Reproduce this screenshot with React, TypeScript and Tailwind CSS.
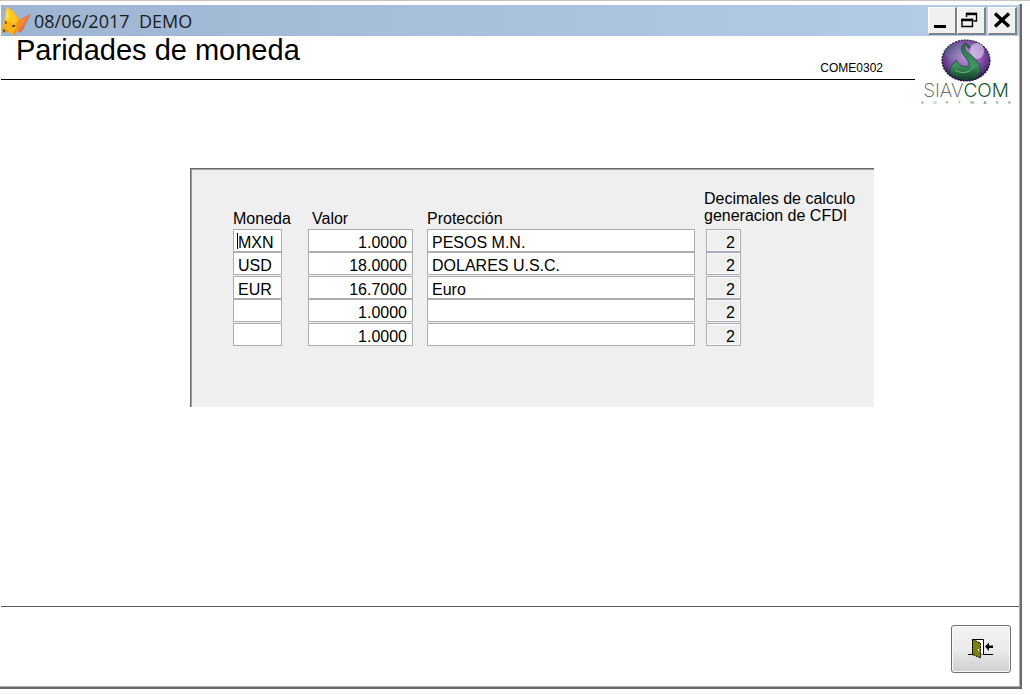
import type { ReactNode } from "react";

type Row = {
  moneda: string;
  valor: string;
  proteccion: string;
  decimales: string;
};

const rows: Row[] = [
  { moneda: "MXN", valor: "1.0000", proteccion: "PESOS M.N.", decimales: "2" },
  { moneda: "USD", valor: "18.0000", proteccion: "DOLARES U.S.C.", decimales: "2" },
  { moneda: "EUR", valor: "16.7000", proteccion: "Euro", decimales: "2" },
  { moneda: "", valor: "1.0000", proteccion: "", decimales: "2" },
  { moneda: "", valor: "1.0000", proteccion: "", decimales: "2" },
];

const field =
  "block h-[23px] border border-[#abadb3] bg-white pt-1 pr-[5px] pl-1 leading-4 outline-none";

function FoxIcon() {
  return (
    <svg className="h-[30px] w-[31px] shrink-0" viewBox="0 0 93 90" aria-hidden="true">
      <path d="M91 24 76 30 60 38 52 50 52 78 60 80 68 68 76 50Z" fill="#e2744f" />
      <path d="M82 30 62 40 52 50 52 64 62 60 72 44Z" fill="#f08a3c" />
      <path d="M18 2 27 10 38 16 46 28 56 38 60 50 56 68 48 76 40 88 30 82 24 78 6 80 4 60 10 48 12 30Z" fill="#f6b01a" />
      <path d="M18 2 27 10 38 18 44 30 50 44 40 54 22 46 12 54 12 30Z" fill="#fcc922" />
      <path d="M18 6 22 14 24 34 16 42 15 26Z" fill="#ffdf4a" />
      <path d="M56 38 60 50 56 68 48 76 40 88 36 80 46 66 48 50Z" fill="#f0901c" />
      <path d="M4 64 14 70 24 74 22 78 6 80Z" fill="#d69a1c" />
      <path d="M12 46h5v7h-5zM34 57h8v6h-8zM6 71h6v6h-6z" fill="#6d4210" />
    </svg>
  );
}

function SiavcomLogo() {
  return (
    <div className="flex w-[90px] flex-col items-center">
      <svg className="h-[45px] w-[52px]" viewBox="0 0 52 45" aria-hidden="true">
        <defs>
          <radialGradient id="ball" cx="0.5" cy="0.4" r="0.6">
            <stop offset="0" stopColor="#b79bd8" />
            <stop offset="0.45" stopColor="#9a62bc" />
            <stop offset="0.8" stopColor="#5f3684" />
            <stop offset="1" stopColor="#1c1236" />
          </radialGradient>
          <linearGradient id="shine" x1="0" y1="0" x2="1" y2="1">
            <stop offset="0" stopColor="#2f5a68" />
            <stop offset="1" stopColor="#8fa8c4" stopOpacity="0.3" />
          </linearGradient>
          <linearGradient id="snake" x1="0" y1="0" x2="0" y2="1">
            <stop offset="0" stopColor="#2b6e58" />
            <stop offset="0.6" stopColor="#3f9460" />
            <stop offset="1" stopColor="#123f28" />
          </linearGradient>
        </defs>
        <ellipse cx="26" cy="22.5" rx="24" ry="20.5" fill="url(#ball)" stroke="#24163c" strokeWidth="1.2" strokeDasharray="2 1" />
        <ellipse cx="15" cy="14" rx="10" ry="8" fill="url(#shine)" opacity="0.7" />
        <ellipse cx="37" cy="13" rx="7" ry="8" fill="#e2d8f2" opacity="0.6" />
        <path
          d="M30 10C29 4 22 4 21.5 10C21 16 27 20 29 25C30 30 21 31 16 22C11 27 8 33 12 37C20 43 34 43 39 37C43 30 38 23 31 17C27 14 24 12 24.5 9C25 7 28 7 28 10Z"
          fill="url(#snake)"
          stroke="#174a34"
          strokeWidth="0.8"
        />
        <path d="M15 32C22 37 33 34 34 27" fill="none" stroke="#68b880" strokeWidth="1" />
      </svg>
      <div className="font-['Inter',sans-serif] text-[19px] leading-4 font-extralight text-[#555555]">
        SIAV<span className="font-light text-[#17552d]">COM</span>
      </div>
      <div className="mt-0.5 flex w-full justify-between text-[4px] leading-1 text-[#666666]">
        {["S", "O", "F", "T", "W", "A", "R", "E"].map((c) => (
          <span key={c}>{c}</span>
        ))}
      </div>
    </div>
  );
}

function WindowButton({ label, children }: { label: string; children: ReactNode }) {
  return (
    <button
      type="button"
      aria-label={label}
      className="flex h-7 w-[29px] items-center justify-center border-t border-r-2 border-b-2 border-l border-t-white border-r-[#7d8288] border-b-[#7d8288] border-l-white bg-[#f0f0f0]"
    >
      <svg className="h-5 w-5" viewBox="0 0 20 20" fill="none" stroke="#000">
        {children}
      </svg>
    </button>
  );
}

export default function App() {
  return (
    <div className="h-screen border-t border-[#c9c2c4] bg-[#fdfdfd] pt-[3px] pr-2 pb-1.5 font-['Liberation_Sans',Arial,sans-serif] text-black">
      <div className="flex h-full flex-col border-r-2 border-b-2 border-[#696969] bg-white">
        <div className="flex min-h-0 flex-1 flex-col border-r border-b border-[#b0b0b0] pt-px pl-px">
          {/* Barra de título */}
          <div className="flex h-[31px] shrink-0 items-center bg-linear-to-r from-[#9db5d2] to-[#b5cde8] pr-0.5">
            <FoxIcon />
            <span className="ml-0.5 flex-1 font-['Open_Sans','Noto_Sans',sans-serif] text-lg leading-6 whitespace-pre text-[#1a1a1a]">
              08/06/2017{"  "}DEMO
            </span>
            <div className="flex">
              <WindowButton label="Minimizar">
                <path d="M2 16.5h12" strokeWidth="3" />
              </WindowButton>
              <WindowButton label="Restaurar">
                <path d="M5.5 7V3.5h10V11h-3" strokeWidth="1.4" />
                <path d="M5 4h11" strokeWidth="2.4" />
                <path d="M1 9.5h10.5v7H1z" strokeWidth="1.4" />
                <path d="M.3 10h12" strokeWidth="2.4" />
              </WindowButton>
            </div>
            <div className="ml-0.5">
              <WindowButton label="Cerrar">
                <path d="M3 3.5 17 16.5M17 3.5 3 16.5" strokeWidth="3.4" />
              </WindowButton>
            </div>
          </div>

          {/* Encabezado */}
          <header className="flex shrink-0 items-start">
            <div className="flex h-11 flex-1 items-start justify-between border-b border-black pr-8 pl-[15px]">
              <h1 className="text-[29px] leading-7">Paridades de moneda</h1>
              <span className="mt-6 text-xs leading-4">COME0302</span>
            </div>
            <div className="pt-0.5 pr-2 pl-1.5">
              <SiavcomLogo />
            </div>
          </header>

          {/* Tabla de paridades */}
          <main className="flex-1 pt-[63px] pr-[145px] pl-[189px]">
            <div className="border-t border-l border-[#696969]">
              <div className="min-h-[238px] border-t border-l border-[#a0a0a0] bg-[#efefef] pt-5 pr-5 pl-[41px]">
                <table className="w-full table-fixed text-left leading-[17px]">
                  <thead>
                    <tr className="h-[39px]">
                      <th className="w-[75px] pb-0.5 align-bottom font-normal">Moneda</th>
                      <th className="w-[119px] pb-0.5 pl-1 align-bottom font-normal">Valor</th>
                      <th className="pb-0.5 align-bottom font-normal">Protección</th>
                      <th className="w-[150px] align-top font-normal whitespace-nowrap">
                        Decimales de calculo
                        <br />
                        generacion de CFDI
                      </th>
                    </tr>
                  </thead>
                  <tbody>
                    {rows.map((row, i) => (
                      <tr key={i} className="h-[23px] align-top even:h-6">
                        <td className="relative">
                          <input className={`${field} w-[49px]`} aria-label="Moneda" defaultValue={row.moneda} />
                          {/* Cursor de texto en el primer campo */}
                          {i === 0 && <span className="absolute top-1 left-1 h-4 w-px bg-black" />}
                        </td>
                        <td>
                          <input className={`${field} w-[105px] text-right`} aria-label="Valor" defaultValue={row.valor} />
                        </td>
                        <td className="pr-[9px]">
                          <input className={`${field} w-full`} aria-label="Protección" defaultValue={row.proteccion} />
                        </td>
                        <td className="pl-0.5">
                          <input
                            className="block h-[23px] w-[35px] border border-[#abadb3] bg-[#efefef] pt-1 pr-[5px] pl-1 text-right leading-4 inset-ring inset-ring-[#fafafa] outline-none"
                            aria-label="Decimales de calculo generacion de CFDI"
                            defaultValue={row.decimales}
                          />
                        </td>
                      </tr>
                    ))}
                  </tbody>
                </table>
              </div>
            </div>
          </main>

          {/* Pie */}
          <footer className="flex h-20 shrink-0 items-center justify-end border-t border-[#5c5c5c] pt-1 pr-2">
            <button
              type="button"
              aria-label="Salir"
              className="flex h-12 w-[60px] items-center justify-center rounded-[3px] border border-[#707070] bg-linear-to-b from-[#f3f3f3] from-0% via-[#ebebeb] via-50% to-[#cfcfcf] inset-ring inset-ring-[#fafafa]"
            >
              <svg className="h-5 w-[26px]" viewBox="0 0 26 20" fill="none" aria-hidden="true">
                <path d="M0 15.5h5M12 15.5h13" stroke="#000" />
                <path d="M4.5 15.5V.5h11v15" fill="#fff" stroke="#000" />
                <path d="M4.5.5 12.5 4v15L4.5 15.5z" fill="#808000" stroke="#000" strokeDasharray="2 1" />
                <path d="M10 10h1v2h-1z" fill="#fff" />
                <path d="M17 7.5 21 3.5v3h4v2.5h-4v3z" fill="#000" />
              </svg>
            </button>
          </footer>
        </div>
      </div>
    </div>
  );
}
